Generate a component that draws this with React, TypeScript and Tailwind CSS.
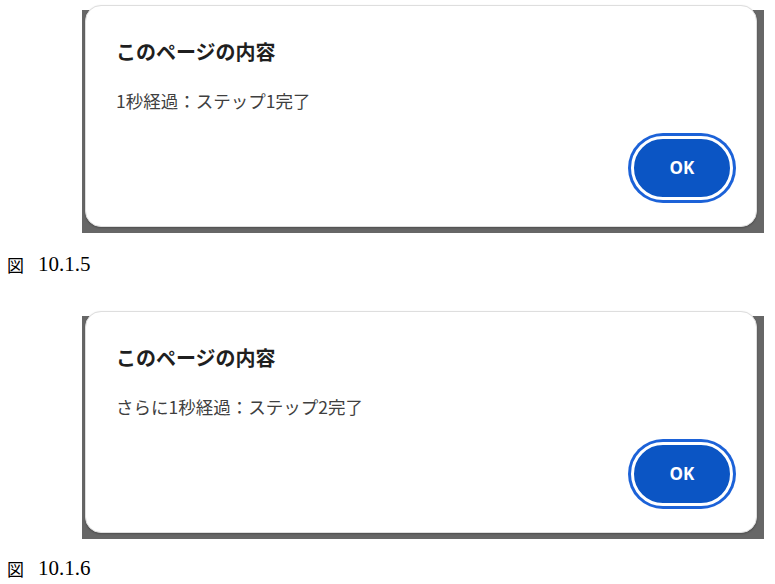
import React from 'react';

// Browser alert dialog captured over a grey page backdrop
function AlertShot({ message }: { message: string }) {
  return (
    <div className="ml-[82px] w-[682px] pl-[3px] pr-[7px] pb-[6px] bg-[linear-gradient(to_bottom,transparent_5px,#676767_5px)]">
      <div className="flex flex-col h-[222px] rounded-[16px] bg-white border border-[#dedede] shadow-[0_1px_2px_rgba(0,0,0,0.25)] pl-[30px] pr-[23px] pt-[32px] font-['Noto_Sans_CJK_JP',sans-serif]">
        <h2 className="text-[20px] leading-[28px] font-bold text-[#1f1f1f]">このページの内容</h2>
        <p className="mt-[23px] text-[17.5px] leading-[24px] text-[#3f3f3f]">{message}</p>
        <div className="flex justify-end mt-[23px]">
          <button className="w-[102px] h-[64px] rounded-full bg-[#0b55c4] border-[3px] border-white ring-[3px] ring-[#1c62d8] text-white text-[17px] font-bold font-['Open_Sans',sans-serif]">
            OK
          </button>
        </div>
      </div>
    </div>
  );
}

function Caption({ label }: { label: string }) {
  return (
    <div className="flex items-center h-[26px] pl-[7px] gap-[14px] text-black">
      <span className="text-[17px] font-['Noto_Sans_CJK_JP',serif]">図</span>
      <span className="text-[21px] font-['Liberation_Serif',serif]">{label}</span>
    </div>
  );
}

export default function App() {
  return (
    <div className="w-[775px] h-[584px] bg-white pt-[5px] overflow-hidden">
      <AlertShot message="1秒経過：ステップ1完了" />
      <div className="mt-[19px]">
        <Caption label="10.1.5" />
      </div>
      <div className="mt-[33px]">
        <AlertShot message="さらに1秒経過：ステップ2完了" />
      </div>
      <div className="mt-[17px]">
        <Caption label="10.1.6" />
      </div>
    </div>
  );
}
